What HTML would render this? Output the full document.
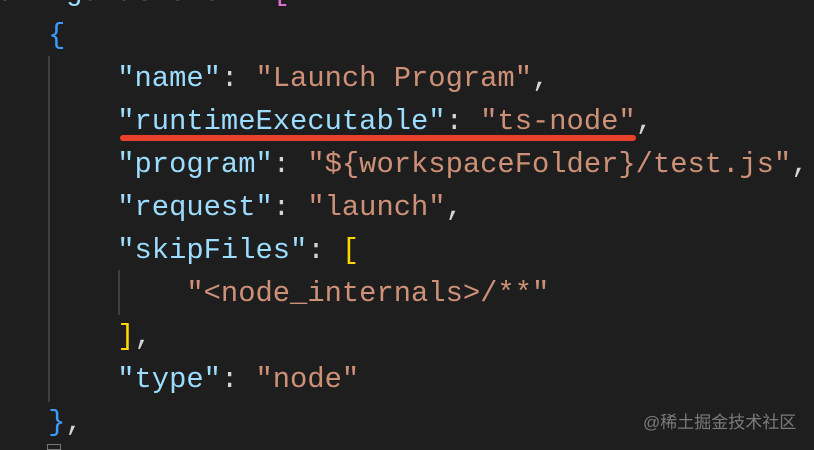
<!DOCTYPE html>
<html><head><meta charset="utf-8"><style>
html,body{margin:0;padding:0;width:814px;height:448px;overflow:hidden;background:#1e1e1e}
.code{position:absolute;left:-21px;top:-29px;font-family:"Liberation Mono",monospace;font-size:28.8px;line-height:43px;white-space:pre;color:#d4d4d4}
.k{color:#9cdcfe}.s{color:#ce9178}.b{color:#3a9cff}.y{color:#ffd700}.p{color:#da70d6}
.g{position:absolute;width:2px;background:#404040}
.u{position:absolute;left:120px;top:135px;width:516px;height:6px;border-radius:3px;background:#e8402a}
.w{position:absolute;left:643px;top:408px;font-family:"Liberation Sans","Noto Sans CJK SC",sans-serif;font-size:17px;color:#7a7a7a}
</style></head><body>
<div class="g" style="left:48px;top:56px;height:346px"></div>
<div class="g" style="left:118px;top:270px;height:45px"></div>
<div class="code"><span class="k">configurations</span>": <span class="p">[</span>
    <span class="b">{</span>
        <span class="k">"name"</span>: <span class="s">"Launch Program"</span>,
        <span class="k">"runtimeExecutable"</span>: <span class="s">"ts-node"</span>,
        <span class="k">"program"</span>: <span class="s">"${workspaceFolder}/test.js"</span>,
        <span class="k">"request"</span>: <span class="s">"launch"</span>,
        <span class="k">"skipFiles"</span>: <span class="y">[</span>
            <span class="s">"&lt;node_internals&gt;/**"</span>
        <span class="y">]</span>,
        <span class="k">"type"</span>: <span class="s">"node"</span>
    <span class="b">}</span>,
</div>
<div class="u"></div>
<div style="position:absolute;left:47px;top:444px;width:14px;height:6px;border:1px solid #777;box-sizing:border-box"></div>
<div class="w">@稀土掘金技术社区</div>
</body></html>
